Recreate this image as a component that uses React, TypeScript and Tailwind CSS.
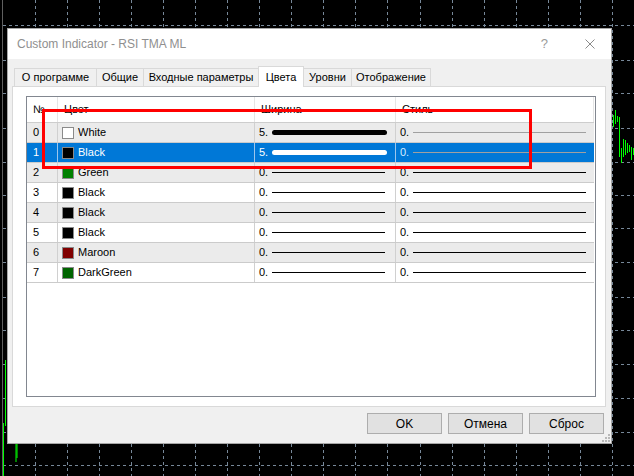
import React from 'react';

// chart behind the dialog
const hLines = [25, 60, 93, 128, 162, 195, 228, 262, 297, 330, 364, 398, 432, 465];
const vLines = [35, 67, 99, 131, 163, 195, 227, 259, 291, 323, 355, 387, 420, 452, 484, 516, 548, 580, 612];
const candles: [number, number, number][] = [
  [3.5, 423, 476], [5.5, 360, 426], [16, 440, 462], [17, 444, 458],
  [613.5, 115, 127], [615.5, 110, 124], [617.5, 116, 122], [619.5, 117, 157],
  [621.5, 148, 163], [623.5, 139, 157], [625.5, 140, 155], [627.5, 143, 153],
  [629.5, 145, 152], [631.5, 147, 160], [633.5, 148, 155],
];

interface ColorRow {
  name: string;
  color: string;
  width: string;
  thick?: boolean;
}

const rows: ColorRow[] = [
  { name: 'White', color: '#ffffff', width: '5.', thick: true },
  { name: 'Black', color: '#000000', width: '5.', thick: true },
  { name: 'Green', color: '#008000', width: '0.' },
  { name: 'Black', color: '#000000', width: '0.' },
  { name: 'Black', color: '#000000', width: '0.' },
  { name: 'Black', color: '#000000', width: '0.' },
  { name: 'Maroon', color: '#800000', width: '0.' },
  { name: 'DarkGreen', color: '#006400', width: '0.' },
];

const tabs = [
  { label: 'О программе', w: 'w-[83px]' },
  { label: 'Общие', w: 'w-[48px]' },
  { label: 'Входные параметры', w: 'w-[116px]' },
  { label: 'Цвета', w: 'w-[46px]', active: true },
  { label: 'Уровни', w: 'w-[49px]' },
  { label: 'Отображение', w: 'w-[80px]' },
];

const ChartGrid: React.FC = () => (
  <svg className="absolute inset-0" width="634" height="476">
    <line x1="2.5" y1="0" x2="2.5" y2="476" stroke="#5f5f5f" />
    {hLines.map((y) => (
      <line key={'h' + y} x1="3" y1={y + 0.5} x2="634" y2={y + 0.5} stroke="#778899" strokeDasharray="3 3" />
    ))}
    {vLines.map((x) => (
      <line key={'v' + x} x1={x + 0.5} y1="0" x2={x + 0.5} y2="476" stroke="#778899" strokeDasharray="3 3" />
    ))}
    {candles.map(([x, y1, y2], i) => (
      <line key={'c' + i} x1={x} y1={y1} x2={x} y2={y2} stroke="#00ff00" />
    ))}
  </svg>
);

const App: React.FC = () => {
  return (
    <div className="relative w-[634px] h-[476px] bg-black overflow-hidden font-['Liberation_Sans',Arial,sans-serif]">
      <ChartGrid />

      {/* Dialog window */}
      <div className="absolute left-[7px] top-[28px] w-[605px] h-[416px] border border-[#a6a6a6] bg-[#f0f0f0] flex flex-col">
        {/* Title bar */}
        <div className="h-[30px] bg-white flex items-center pl-[9px] pr-[16px] shrink-0">
          <span className="text-[12px] text-[#8f8f8f]">Custom Indicator - RSI TMA ML</span>
          <span className="ml-auto text-[13px] text-[#9a9a9a] mr-[37px]">?</span>
          <svg width="10" height="10" viewBox="0 0 10 10">
            <path d="M0.5 0.5 L9.5 9.5 M9.5 0.5 L0.5 9.5" stroke="#8a8a8a" strokeWidth="1" />
          </svg>
        </div>

        {/* Body */}
        <div className="flex-1 flex flex-col pt-[7px] pl-[4px] pr-[5px]">
          {/* Tabs */}
          <div className="h-[20px] flex items-end pl-[2px] shrink-0">
            {tabs.map((t, i) =>
              t.active ? (
                <div
                  key={t.label}
                  className={`${t.w} h-[21px] -mb-px -ml-px relative z-10 bg-white border border-b-0 border-[#d9d9d9] flex items-center justify-center whitespace-nowrap text-[11px] text-black`}
                >
                  {t.label}
                </div>
              ) : (
                <div
                  key={t.label}
                  className={`${t.w} h-[18px] ${i === 0 ? '' : '-ml-px'} bg-[#f0f0f0] border border-b-0 border-[#d9d9d9] flex items-center justify-center whitespace-nowrap text-[11px] text-black`}
                >
                  {t.label}
                </div>
              )
            )}
          </div>

          {/* Tab panel */}
          <div className="h-[321px] bg-white border border-[#d9d9d9] pl-[13px] pt-[9px] shrink-0">
            <div className="w-[570px] h-[301px] border border-[#828790] bg-white text-[11px] text-black">
              {/* Header */}
              <div className="h-[26px] flex border-b border-[#cdcdcd] w-[567px]">
                <div className="w-[31px] border-r border-[#e5e5e5] pl-[6px] flex items-center">№</div>
                <div className="w-[197px] border-r border-[#e5e5e5] pl-[6px] flex items-center">Цвет</div>
                <div className="w-[141px] border-r border-[#e5e5e5] pl-[6px] flex items-center">Ширина</div>
                <div className="flex-1 border-r border-[#e5e5e5] pl-[6px] flex items-center">Стиль</div>
              </div>

              {rows.map((r, i) => {
                const selected = i === 1;
                const rowBg = selected ? 'bg-[#0078d7] text-white' : i % 2 === 0 ? 'bg-[#ebebeb]' : 'bg-white';
                const sep = selected ? 'border-[#9cc6ec]' : 'border-[#d0d0d0]';
                return (
                  <div key={i} className={`h-[20px] w-[567px] flex border-b border-b-[#cbcbcb] ${rowBg}`}>
                    <div className={`w-[31px] border-r ${sep} pl-[6px] flex items-center`}>{i}</div>
                    <div className={`w-[197px] border-r ${sep} pl-[4px] flex items-center`}>
                      <span
                        className="w-[12px] h-[12px] border border-[#8a8a8a] shrink-0"
                        style={{ backgroundColor: r.color }}
                      />
                      <span className="ml-[4px]">{r.name}</span>
                    </div>
                    <div className={`w-[141px] border-r ${sep} pl-[4px] flex items-center`}>
                      <span className="w-[13px] shrink-0">{r.width}</span>
                      {r.thick ? (
                        <div className={`w-[115px] h-[5px] rounded-full ${selected ? 'bg-white' : 'bg-black'}`} />
                      ) : (
                        <div className="w-[113px] h-px bg-black" />
                      )}
                    </div>
                    <div className="flex-1 pl-[4px] flex items-center">
                      <span className={`w-[13px] shrink-0 ${selected ? 'text-[#d8ecff]' : ''}`}>0.</span>
                      <div className={`w-[173px] h-px ${r.thick ? 'bg-[#a0a0a0]' : 'bg-black'}`} />
                    </div>
                  </div>
                );
              })}
            </div>
          </div>

          {/* Buttons */}
          <div className="mt-[6px] h-[21px] flex justify-end gap-[6px] pr-[2px] shrink-0">
            {['OK', 'Отмена', 'Сброс'].map((b) => (
              <button
                key={b}
                className="w-[75px] h-[21px] bg-[#e1e1e1] border border-[#adadad] text-[12px] text-black flex items-center justify-center"
              >
                {b}
              </button>
            ))}
          </div>
        </div>

        {/* Size grip */}
        <svg className="absolute right-[1px] bottom-[1px]" width="8" height="8" viewBox="0 0 8 8">
          <rect x="6" y="0" width="2" height="2" fill="#b8b8b8" />
          <rect x="3" y="3" width="2" height="2" fill="#b8b8b8" />
          <rect x="6" y="3" width="2" height="2" fill="#b8b8b8" />
          <rect x="0" y="6" width="2" height="2" fill="#b8b8b8" />
          <rect x="3" y="6" width="2" height="2" fill="#b8b8b8" />
          <rect x="6" y="6" width="2" height="2" fill="#b8b8b8" />
        </svg>
      </div>

      {/* Red annotation rectangle */}
      <div className="absolute left-[42px] top-[109px] w-[490px] h-[60px] border-[3px] border-[#ff0000] pointer-events-none" />
    </div>
  );
};

export default App;
